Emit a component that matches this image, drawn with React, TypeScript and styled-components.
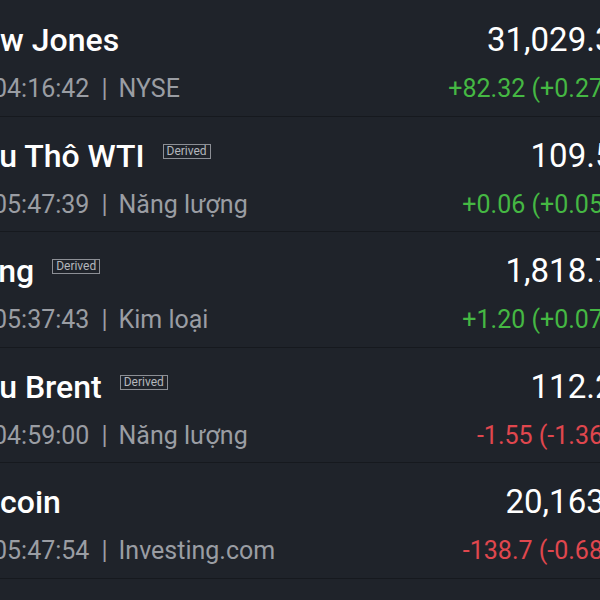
import React from "react";
import styled, { createGlobalStyle } from "styled-components";
import { Clock } from "lucide-react";

const GlobalStyle = createGlobalStyle`
  html, body { margin: 0; padding: 0; background: #1f232a; }
  body { font-family: Roboto, "Noto Sans", "Liberation Sans", sans-serif; }
`;

const Viewport = styled.div`
  width: 600px;
  height: 600px;
  overflow: hidden;
  background: #1f232a;
`;

const List = styled.ul`
  list-style: none;
  margin: 1px -30px 0 -39px;
  padding: 0;
`;

const Row = styled.li`
  box-sizing: border-box;
  height: 115.5px;
  padding-top: 21px;
  display: grid;
  grid-template-columns: 1fr auto;
  grid-template-rows: 36px 30px;
  row-gap: 16px;
  border-bottom: 1px solid #16191e;
`;

const TitleLine = styled.div`
  display: flex;
  align-items: center;
  min-width: 0;
  white-space: nowrap;
`;

const Name = styled.span`
  font-size: 32px;
  line-height: 36px;
  font-weight: 500;
  color: #ffffff;
`;

const Badge = styled.span`
  margin-left: 18px;
  margin-top: -9px;
  box-sizing: border-box;
  height: 15px;
  padding: 0 3px;
  border: 1px solid #8c8f95;
  font-size: 12px;
  line-height: 13px;
  color: #b4b7bc;
`;

const Price = styled.span`
  font-size: 33px;
  line-height: 36px;
  color: #ffffff;
  text-align: right;
  white-space: nowrap;
  margin-right: -2px;
`;

const MetaLine = styled.div`
  display: flex;
  align-items: center;
  font-size: 25px;
  line-height: 30px;
  color: #9a9da3;
  white-space: nowrap;
`;

const StatusIcon = styled.span`
  display: inline-flex;
  width: 20px;
  margin-right: 12px;
  color: #9a9da3;
`;

const Sep = styled.span`
  margin: 0 11px 0 12px;
`;

const Change = styled.span<{ $up: boolean }>`
  font-size: 25px;
  line-height: 30px;
  text-align: right;
  white-space: nowrap;
  color: ${(p) => (p.$up ? "#45b843" : "#e0474e")};
`;

type Item = {
  name: string;
  derived?: boolean;
  time: string;
  source: string;
  price: string;
  change: string;
  up: boolean;
};

const items: Item[] = [
  { name: "Dow Jones", time: "04:16:42", source: "NYSE", price: "31,029.31", change: "+82.32 (+0.27%)", up: true },
  { name: "Dầu Thô WTI", derived: true, time: "05:47:39", source: "Năng lượng", price: "109.57", change: "+0.06 (+0.05%)", up: true },
  { name: "Vàng", derived: true, time: "05:37:43", source: "Kim loại", price: "1,818.70", change: "+1.20 (+0.07%)", up: true },
  { name: "Dầu Brent", derived: true, time: "04:59:00", source: "Năng lượng", price: "112.21", change: "-1.55 (-1.36%)", up: false },
  { name: "Bitcoin", time: "05:47:54", source: "Investing.com", price: "20,163.7", change: "-138.7 (-0.68%)", up: false },
];

export default function App() {
  return (
    <Viewport>
      <GlobalStyle />
      <List>
        {items.map((it) => (
          <Row key={it.name}>
            <TitleLine>
              <Name>{it.name}</Name>
              {it.derived && <Badge>Derived</Badge>}
            </TitleLine>
            <Price>{it.price}</Price>
            <MetaLine>
              <StatusIcon>
                <Clock size={20} />
              </StatusIcon>
              <span>{it.time}</span>
              <Sep>|</Sep>
              <span>{it.source}</span>
            </MetaLine>
            <Change $up={it.up}>{it.change}</Change>
          </Row>
        ))}
      </List>
    </Viewport>
  );
}
